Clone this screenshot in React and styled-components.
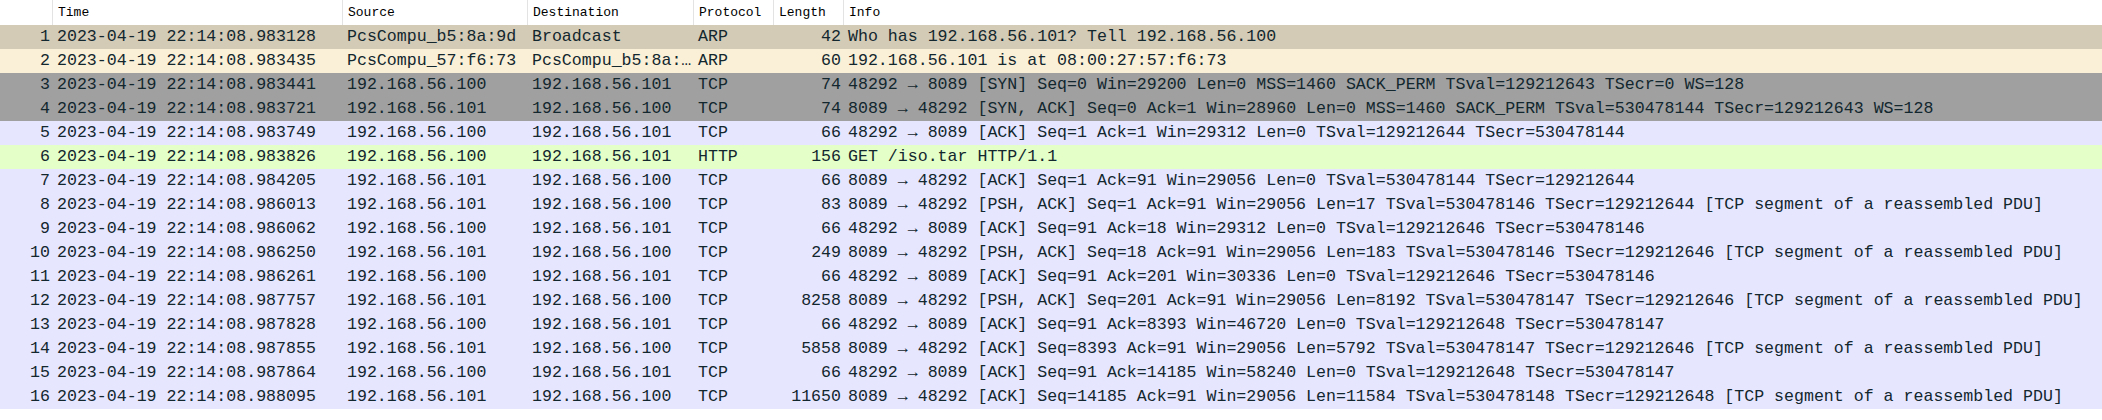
import React from 'react';
import styled, { createGlobalStyle } from 'styled-components';

const GlobalStyle = createGlobalStyle`
  html, body {
    margin: 0;
    padding: 0;
    background: #ffffff;
  }
`;

// 列宽（与 Wireshark 分组列表一致）
const COLUMNS = '53px 290px 185px 166px 80px 70px 1fr';

const ROW_COLORS = {
  arpReq: '#d4cbb6',
  arp: '#faf0d7',
  syn: '#a0a0a0',
  tcp: '#e7e6ff',
  http: '#e4ffc7',
};

const PacketList = styled.div`
  width: 100%;
  min-height: 420px;
  background: #ffffff;
`;

const HeaderRow = styled.div`
  display: grid;
  grid-template-columns: ${COLUMNS};
  height: 25px;
  background: #ffffff;
`;

const HeaderCell = styled.div`
  display: flex;
  align-items: center;
  padding-left: 5px;
  border-right: ${(p) => (p.$last ? 'none' : '1px solid #e3e3e3')};
  font-family: 'Liberation Mono', 'DejaVu Sans Mono', monospace;
  font-size: 13px;
  color: #000000;
  white-space: nowrap;
  overflow: hidden;
`;

const Row = styled.div`
  display: grid;
  grid-template-columns: ${COLUMNS};
  height: 24px;
  background: ${(p) => ROW_COLORS[p.$kind]};
  color: #12272e;
  font-family: 'Liberation Mono', 'DejaVu Sans Mono', monospace;
  font-size: 16.6px;
  line-height: 24px;
`;

const Cell = styled.div`
  padding: 0 3px 0 4px;
  text-align: ${(p) => (p.$right ? 'right' : 'left')};
  white-space: pre;
  overflow: hidden;
`;

const C = '192.168.56.100';
const S = '192.168.56.101';
const PDU = ' [TCP segment of a reassembled PDU]';

const packets = [
  [1, '983128', 'PcsCompu_b5:8a:9d', 'Broadcast', 'ARP', 42, 'Who has 192.168.56.101? Tell 192.168.56.100', 'arpReq'],
  [2, '983435', 'PcsCompu_57:f6:73', 'PcsCompu_b5:8a:…', 'ARP', 60, '192.168.56.101 is at 08:00:27:57:f6:73', 'arp'],
  [3, '983441', C, S, 'TCP', 74, '48292 → 8089 [SYN] Seq=0 Win=29200 Len=0 MSS=1460 SACK_PERM TSval=129212643 TSecr=0 WS=128', 'syn'],
  [4, '983721', S, C, 'TCP', 74, '8089 → 48292 [SYN, ACK] Seq=0 Ack=1 Win=28960 Len=0 MSS=1460 SACK_PERM TSval=530478144 TSecr=129212643 WS=128', 'syn'],
  [5, '983749', C, S, 'TCP', 66, '48292 → 8089 [ACK] Seq=1 Ack=1 Win=29312 Len=0 TSval=129212644 TSecr=530478144', 'tcp'],
  [6, '983826', C, S, 'HTTP', 156, 'GET /iso.tar HTTP/1.1', 'http'],
  [7, '984205', S, C, 'TCP', 66, '8089 → 48292 [ACK] Seq=1 Ack=91 Win=29056 Len=0 TSval=530478144 TSecr=129212644', 'tcp'],
  [8, '986013', S, C, 'TCP', 83, '8089 → 48292 [PSH, ACK] Seq=1 Ack=91 Win=29056 Len=17 TSval=530478146 TSecr=129212644' + PDU, 'tcp'],
  [9, '986062', C, S, 'TCP', 66, '48292 → 8089 [ACK] Seq=91 Ack=18 Win=29312 Len=0 TSval=129212646 TSecr=530478146', 'tcp'],
  [10, '986250', S, C, 'TCP', 249, '8089 → 48292 [PSH, ACK] Seq=18 Ack=91 Win=29056 Len=183 TSval=530478146 TSecr=129212646' + PDU, 'tcp'],
  [11, '986261', C, S, 'TCP', 66, '48292 → 8089 [ACK] Seq=91 Ack=201 Win=30336 Len=0 TSval=129212646 TSecr=530478146', 'tcp'],
  [12, '987757', S, C, 'TCP', 8258, '8089 → 48292 [PSH, ACK] Seq=201 Ack=91 Win=29056 Len=8192 TSval=530478147 TSecr=129212646' + PDU, 'tcp'],
  [13, '987828', C, S, 'TCP', 66, '48292 → 8089 [ACK] Seq=91 Ack=8393 Win=46720 Len=0 TSval=129212648 TSecr=530478147', 'tcp'],
  [14, '987855', S, C, 'TCP', 5858, '8089 → 48292 [ACK] Seq=8393 Ack=91 Win=29056 Len=5792 TSval=530478147 TSecr=129212646' + PDU, 'tcp'],
  [15, '987864', C, S, 'TCP', 66, '48292 → 8089 [ACK] Seq=91 Ack=14185 Win=58240 Len=0 TSval=129212648 TSecr=530478147', 'tcp'],
  [16, '988095', S, C, 'TCP', 11650, '8089 → 48292 [ACK] Seq=14185 Ack=91 Win=29056 Len=11584 TSval=530478148 TSecr=129212648' + PDU, 'tcp'],
];

const headers = ['', 'Time', 'Source', 'Destination', 'Protocol', 'Length', 'Info'];

const App = () => (
  <PacketList>
    <GlobalStyle />
    <HeaderRow>
      {headers.map((h, i) => (
        <HeaderCell key={i} $last={i === headers.length - 1}>{h}</HeaderCell>
      ))}
    </HeaderRow>
    {packets.map(([no, frac, src, dst, proto, len, info, kind]) => (
      <Row key={no} $kind={kind}>
        <Cell $right>{no}</Cell>
        <Cell>{`2023-04-19 22:14:08.${frac}`}</Cell>
        <Cell>{src}</Cell>
        <Cell>{dst}</Cell>
        <Cell>{proto}</Cell>
        <Cell $right>{len}</Cell>
        <Cell>{info}</Cell>
      </Row>
    ))}
  </PacketList>
);

export default App;
